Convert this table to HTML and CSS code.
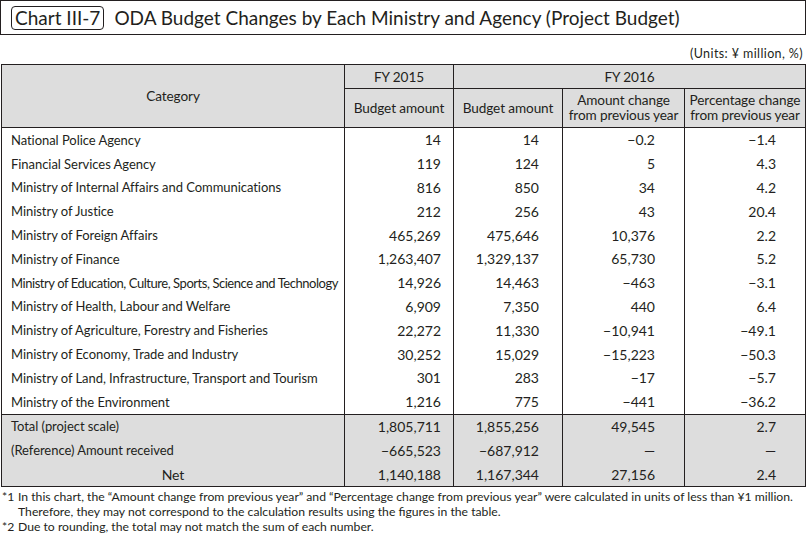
FILE: index.html
```html
<!DOCTYPE html>
<html lang="en">
<head>
<meta charset="utf-8">
<title>Chart III-7</title>
<link rel="stylesheet" href="styles.css">
</head>
<body>
<div class="page">
  <div class="title-box">
    <span class="chart-label">Chart III-7</span>
    <span class="chart-title">ODA Budget Changes by Each Ministry and Agency (Project Budget)</span>
  </div>
  <div class="units">(Units: ¥ million, %)</div>
  <table class="budget">
    <colgroup>
      <col class="c1"><col class="c2"><col class="c3"><col class="c4"><col class="c5">
    </colgroup>
    <thead>
      <tr class="h1">
        <th rowspan="2" class="cat-head">Category</th>
        <th>FY 2015</th>
        <th colspan="3">FY 2016</th>
      </tr>
      <tr class="h2">
        <th>Budget amount</th>
        <th>Budget amount</th>
        <th>Amount change<br>from previous year</th>
        <th>Percentage change<br>from previous year</th>
      </tr>
    </thead>
    <tbody>
      <tr><td>National Police Agency</td><td>14</td><td>14</td><td>−0.2</td><td>−1.4</td></tr>
      <tr><td>Financial Services Agency</td><td>119</td><td>124</td><td>5</td><td>4.3</td></tr>
      <tr><td>Ministry of Internal Affairs and Communications</td><td>816</td><td>850</td><td>34</td><td>4.2</td></tr>
      <tr><td>Ministry of Justice</td><td>212</td><td>256</td><td>43</td><td>20.4</td></tr>
      <tr><td>Ministry of Foreign Affairs</td><td>465,269</td><td>475,646</td><td>10,376</td><td>2.2</td></tr>
      <tr><td>Ministry of Finance</td><td>1,263,407</td><td>1,329,137</td><td>65,730</td><td>5.2</td></tr>
      <tr><td class="tight">Ministry of Education, Culture, Sports, Science and Technology</td><td>14,926</td><td>14,463</td><td>−463</td><td>−3.1</td></tr>
      <tr><td>Ministry of Health, Labour and Welfare</td><td>6,909</td><td>7,350</td><td>440</td><td>6.4</td></tr>
      <tr><td>Ministry of Agriculture, Forestry and Fisheries</td><td>22,272</td><td>11,330</td><td>−10,941</td><td>−49.1</td></tr>
      <tr><td>Ministry of Economy, Trade and Industry</td><td>30,252</td><td>15,029</td><td>−15,223</td><td>−50.3</td></tr>
      <tr><td>Ministry of Land, Infrastructure, Transport and Tourism</td><td>301</td><td>283</td><td>−17</td><td>−5.7</td></tr>
      <tr><td>Ministry of the Environment</td><td>1,216</td><td>775</td><td>−441</td><td>−36.2</td></tr>
    </tbody>
    <tbody class="totals">
      <tr><td>Total (project scale)</td><td>1,805,711</td><td>1,855,256</td><td>49,545</td><td>2.7</td></tr>
      <tr><td>(Reference) Amount received</td><td>−665,523</td><td>−687,912</td><td>—</td><td>—</td></tr>
      <tr><td class="net">Net</td><td>1,140,188</td><td>1,167,344</td><td>27,156</td><td>2.4</td></tr>
    </tbody>
  </table>
  <div class="notes">
    <div class="note"><span class="mark">*1</span><span class="ntext">In this chart, the “Amount change from previous year” and “Percentage change from previous year” were calculated in units of less than ¥1 million.<br>Therefore, they may not correspond to the calculation results using the figures in the table.</span></div>
    <div class="note"><span class="mark">*2</span><span class="ntext">Due to rounding, the total may not match the sum of each number.</span></div>
  </div>
</div>
</body>
</html>
```

FILE: styles.css
```css
html, body {
  margin: 0;
  padding: 0;
  background: #ffffff;
}

.page {
  width: 806px;
  font-family: Lato, "Open Sans", sans-serif;
  color: #231f20;
}

.title-box {
  box-sizing: border-box;
  width: 806px;
  height: 35px;
  border: 1px solid #231f20;
  display: flex;
  align-items: center;
  padding-left: 10px;
  gap: 10px;
}

.chart-label {
  border: 1px solid #231f20;
  border-radius: 4px;
  padding: 0 3px;
  height: 22px;
  line-height: 21px;
  font-size: 19px;
}

.chart-title {
  font-size: 19px;
  line-height: 21px;
}

.units {
  text-align: right;
  font-size: 12.5px;
  letter-spacing: 0.4px;
  padding-right: 3px;
  margin-top: 12px;
  height: 17px;
  line-height: 14px;
}

.budget {
  border-collapse: collapse;
  width: 805px;
  margin-left: 1px;
  font-size: 14px;
  table-layout: fixed;
}

.c1 { width: 343px; }
.c2 { width: 109px; }
.c3 { width: 109px; }
.c4 { width: 122px; }
.c5 { width: 121px; }

.budget th,
.budget td {
  border-left: 1px solid #231f20;
  border-right: 1px solid #231f20;
  padding: 0;
}

.budget thead th {
  background: #dddddd;
  font-weight: normal;
  text-align: center;
  border: 1px solid #231f20;
  font-size: 13.6px;
  letter-spacing: -0.1px;
  white-space: nowrap;
}

.budget tr.h1 th {
  height: 23px;
}

.budget tr.h2 th {
  height: 38px;
  line-height: 15px;
}

.budget tbody td {
  height: 23.8px;
  text-align: right;
  white-space: nowrap;
}

.budget tbody td:first-child {
  text-align: left;
  padding-left: 9px;
  font-size: 13px;
  letter-spacing: -0.05px;
}

.budget tbody td.tight {
  letter-spacing: -0.45px;
}

.budget tbody td:nth-child(2) { padding-right: 12px; }
.budget tbody td:nth-child(3) { padding-right: 23px; }
.budget tbody td:nth-child(4) { padding-right: 29px; }
.budget tbody td:nth-child(5) { padding-right: 29px; }

.budget tbody.totals td {
  background: #dddddd;
}

.budget tbody.totals tr:first-child td {
  border-top: 1px solid #231f20;
}

.budget tbody.totals tr:last-child td {
  border-bottom: 1px solid #231f20;
}

.budget tbody.totals td.net {
  text-align: center;
  padding-left: 0;
  font-size: 14px;
}

.notes {
  margin-top: 3px;
  font-size: 12.2px;
  line-height: 14.8px;
}

.note {
  display: flex;
}

.mark {
  width: 18px;
  padding-left: 2px;
  box-sizing: border-box;
  flex: none;
}
```
